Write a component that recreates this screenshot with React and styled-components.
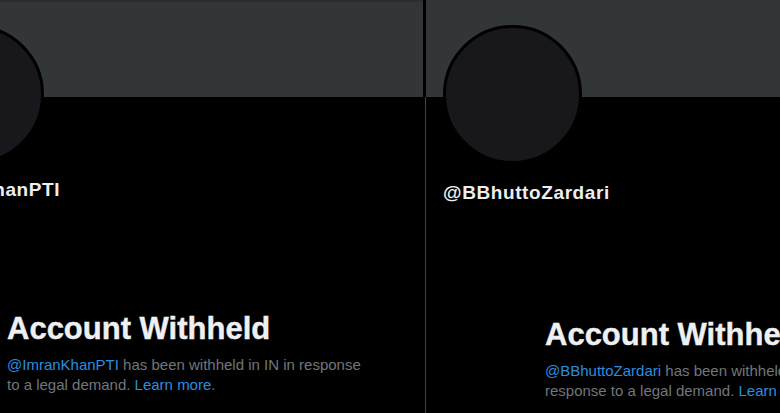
import React from 'react';
import styled, { createGlobalStyle } from 'styled-components';

const profiles = [
  {
    handle: 'ImranKhanPTI',
    offset: -112,
    handleGap: 14,
    titleGap: 109,
    textWidth: 365,
    edge: false
  },
  {
    handle: 'BBhuttoZardari',
    offset: 0,
    handleGap: 17,
    titleGap: 112,
    textWidth: 320,
    edge: true
  }
];

const Profile = ({ handle, offset, handleGap, titleGap, textWidth, edge }) => (
  <Panel edge={edge}>
    <Inner offset={offset}>
      <Banner edge={edge} />
      <Details edge={edge}>
        <Avatar />
        <Handle gap={handleGap}>@{handle}</Handle>
        <Notice gap={titleGap}>
          <Title>Account Withheld</Title>
          <Message width={textWidth}>
            <Link>@{handle}</Link> has been withheld in IN in response to a
            legal demand. <Link>Learn more</Link>.
          </Message>
        </Notice>
      </Details>
    </Inner>
  </Panel>
);

const App = () => (
  <>
    <GlobalStyle />
    <Screen>
      {profiles.map(p => (
        <Profile key={p.handle} {...p} />
      ))}
    </Screen>
  </>
);

const GlobalStyle = createGlobalStyle`
  html, body {
    margin: 0;
    padding: 0;
    background: #000;
  }
  body {
    font-family: "Liberation Sans", Arial, sans-serif;
    overflow: hidden;
  }
`;

const Screen = styled.div`
  display: flex;
  gap: 2px;
  width: 780px;
  height: 413px;
  background: #000;
  overflow: hidden;
`;

const Panel = styled.section`
  flex: ${props => (props.edge ? '1' : '0 0 423px')};
  min-width: 0;
  height: 100%;
  overflow: hidden;
`;

const Inner = styled.div`
  display: flex;
  flex-direction: column;
  width: 640px;
  height: 100%;
  margin-left: ${props => props.offset}px;
`;

const Banner = styled.div`
  flex: 0 0 97px;
  box-sizing: border-box;
  background: #333639;
  border-top: ${props => (props.edge ? '0' : '2px solid #2b2d30')};
  border-left: ${props => (props.edge ? '1px solid #000' : '0')};
`;

const Details = styled.div`
  display: flex;
  flex-direction: column;
  align-items: flex-start;
  flex: 1;
  padding-left: 17px;
  border-left: ${props => (props.edge ? '1px solid #3e4144' : '0')};
`;

const Avatar = styled.div`
  width: 133px;
  height: 133px;
  margin-top: -72px;
  border: 3px solid #000;
  border-radius: 50%;
  background: #18181c;
`;

const Handle = styled.div`
  margin-top: ${props => props.gap}px;
  font-size: 19px;
  line-height: 24px;
  font-weight: 700;
  letter-spacing: 0.6px;
  color: #eceef0;
`;

const Notice = styled.div`
  margin-top: ${props => props.gap}px;
  padding-left: 102px;
`;

const Title = styled.h2`
  margin: 0;
  font-size: 31px;
  line-height: 36px;
  font-weight: 700;
  color: #eef0f1;
  -webkit-text-stroke: 0.4px #eef0f1;
`;

const Message = styled.p`
  width: ${props => props.width}px;
  margin: 8px 0 0;
  font-size: 15px;
  line-height: 20px;
  color: #71767b;
`;

const Link = styled.span`
  color: #2a8ee0;
`;

export default App;
